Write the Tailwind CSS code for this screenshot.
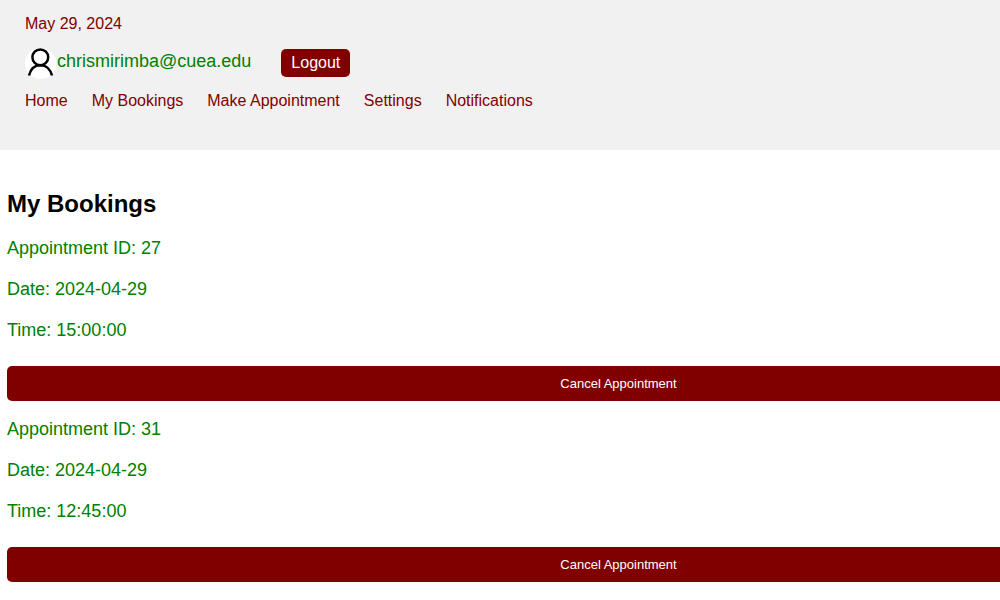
<!DOCTYPE html>
<html lang="en">
<head>
<meta charset="utf-8">
<meta name="viewport" content="width=device-width, initial-scale=1">
<title>My Bookings</title>
<script src="https://cdn.jsdelivr.net/npm/@tailwindcss/browser@4"></script>
</head>
<body class="bg-white font-['Liberation_Sans',Arial,sans-serif] text-[#008000] overflow-x-hidden">
<header class="bg-[#f1f1f1] text-base text-[#800000] px-[25px] pt-3 pb-[37px]">
  <p>May 29, 2024</p>
  <div class="flex items-center h-[30px] mt-3">
    <svg class="size-[31px] shrink-0" viewBox="0 0 31 31" fill="none" stroke="#000" stroke-width="2.5" aria-hidden="true">
      <circle cx="15.5" cy="15.5" r="15.5" fill="#fff" stroke="none"/>
      <circle cx="15.3" cy="9.300" r="7.900"/>
      <path d="M4 27.5C5.500 21.500 9.500 17.200 15.300 17.200S25.500 21.500 27 27.500"/>
    </svg>
    <span class="text-lg leading-5 ml-px mb-[5px] text-[#008000]">chrismirimba@cuea.edu</span>
    <button type="button" class="ml-[30px] h-7 px-[10px] rounded-[5px] bg-[#800000] text-white text-base cursor-pointer">Logout</button>
  </div>
  <nav class="flex flex-wrap gap-x-6 mt-[11px]">
    <a href="#home">Home</a>
    <a href="#bookings">My Bookings</a>
    <a href="#appointment">Make Appointment</a>
    <a href="#settings">Settings</a>
    <a href="#notifications">Notifications</a>
  </nav>
</header>
<main id="bookings" class="w-[123%] pl-[7px] pt-10 pb-4 text-lg leading-5">
  <h1 class="text-2xl leading-7 font-bold text-black">My Bookings</h1>
  <section class="pt-5">
    <p>Appointment ID: 27</p>
    <p class="mt-[21px]">Date: 2024-04-29</p>
    <p class="mt-[21px]">Time: 15:00:00</p>
    <button type="button" class="mt-[26px] block w-full h-[35px] rounded-[5px] bg-[#800000] text-white text-[13px] cursor-pointer">Cancel Appointment</button>
  </section>
  <section class="pt-[18px]">
    <p>Appointment ID: 31</p>
    <p class="mt-[21px]">Date: 2024-04-29</p>
    <p class="mt-[21px]">Time: 12:45:00</p>
    <button type="button" class="mt-[26px] block w-full h-[35px] rounded-[5px] bg-[#800000] text-white text-[13px] cursor-pointer">Cancel Appointment</button>
  </section>
</main>
</body>
</html>
